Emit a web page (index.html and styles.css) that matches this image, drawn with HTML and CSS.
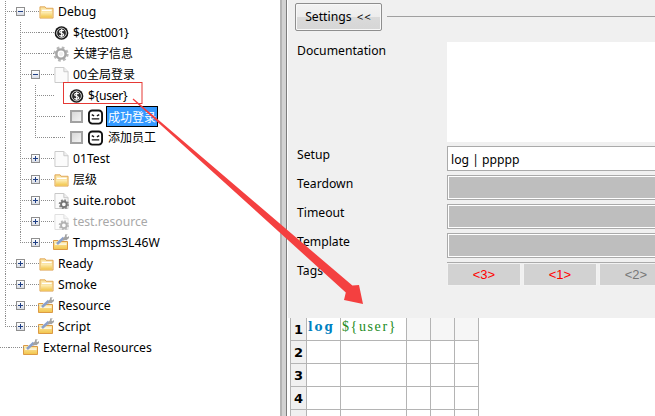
FILE: index.html
```html
<!DOCTYPE html>
<html lang="zh">
<head>
<meta charset="utf-8">
<title>RIDE</title>
<link rel="stylesheet" href="styles.css">
</head>
<body>
<svg class="defs" width="0" height="0">
  <defs>
    <linearGradient id="fg" x1="0" y1="0" x2="0" y2="1"><stop offset="0" stop-color="#fdeeb8"/><stop offset="1" stop-color="#f2c448"/></linearGradient>
    <symbol id="i-folder" viewBox="0 0 16 16">
      <path d="M1 2.500h5.500l1 1.500h7.500v10.500H1z" fill="#fae3a0" stroke="#dfa352"/>
      <path d="M3 5.500h10.500v1.500H3z" fill="#fff"/>
      <path d="M2 8h12v6H2z" fill="url(#fg)"/>
    </symbol>
    <symbol id="i-tool" viewBox="0 0 16 16">
      <path d="M.5 6.500h4.500l1 1h8.500v8H.5z" fill="url(#fg)" stroke="#dc9a45"/>
      <path d="M2 9.500h11.500v1.200H2z" fill="#fff"/>
      <path d="M4 10 10.800 3.800" stroke="#8aa0cc" stroke-width="2.600"/>
      <path d="M9.500 5 11.800 2.500 12.300.3l2.500.2-1.600 1.600 1.200 1.200 1.500-1.300.2 2-2.600 2.200-1.800-.2-1 1z" fill="#a2a2a2"/>
    </symbol>
    <symbol id="i-var" viewBox="0 0 16 16">
      <circle cx="8" cy="8" r="7.300" fill="#161616"/>
      <circle cx="8" cy="8" r="5.200" fill="#2a2a2a" stroke="#dcdcdc"/>
      <path d="M10.500 5.800C9.500 4.800 6 4.800 6 6.600S10.500 8.200 10.500 10C10.500 11.500 7 11.500 5.800 10.400M8.200 3.800v8.600" fill="none" stroke="#fff" stroke-width="1.200"/>
    </symbol>
    <symbol id="i-gear" viewBox="0 0 18 18">
      <circle cx="9" cy="9" r="6.800" fill="none" stroke="#b8b8b8" stroke-width="3.600" stroke-dasharray="2.800 2.540"/>
      <circle cx="9" cy="9" r="5.200" fill="none" stroke="#a6a6a6" stroke-width="2.800"/>
      <circle cx="9" cy="9" r="2.400" fill="#f0f0f0"/>
    </symbol>
    <symbol id="i-page" viewBox="0 0 16 17">
      <path d="M1 .5h9.500l4.500 4.500v11.500H1z" fill="#fbfbfb" stroke="#c8c8c8"/>
      <path d="M10.500.5v4.500h4.500" fill="#efefef" stroke="#c8c8c8"/>
    </symbol>
    <symbol id="i-suite" viewBox="0 0 16 17">
      <path d="M1 .5h9.500l4.500 4.500v11.500H1z" fill="#fbfbfb" stroke="#c4c4c4"/>
      <path d="M10.500.5v4.500h4.500" fill="#efefef" stroke="#c4c4c4"/>
      <circle cx="10.500" cy="12" r="4.500" fill="none" stroke="#858585" stroke-width="2" stroke-dasharray="1.800 1.730"/>
      <circle cx="10.500" cy="12" r="3" fill="none" stroke="#757575" stroke-width="2"/>
    </symbol>
    <symbol id="i-robot" viewBox="0 0 16 16">
      <rect x="1" y="1" width="14" height="14" rx="3.500" fill="#fff" stroke="#111" stroke-width="2"/>
      <path d="M4 5.500l2.500 1.200M12 5.500 9.500 6.700M4 10h8" stroke="#111" stroke-width="1.500" fill="none"/>
    </symbol>
  </defs>
</svg>

<div class="app">
  <nav class="tree">
    <div class="row"><span class="g tee"></span><span class="g h"><i class="box minus"></i></span><span class="g h"></span><svg class="ico"><use href="#i-folder"/></svg><span class="lbl">Debug</span></div>
    <div class="row"><span class="g v"></span><span class="g tee"></span><span class="g h"></span><span class="g h"></span><svg class="ico"><use href="#i-var"/></svg><span class="lbl vn">${test001}</span></div>
    <div class="row"><span class="g v"></span><span class="g tee"></span><span class="g h"></span><span class="g h"></span><svg class="ico gear"><use href="#i-gear"/></svg><span class="lbl zh">关键字信息</span></div>
    <div class="row"><span class="g v"></span><span class="g tee"></span><span class="g h"><i class="box minus"></i></span><span class="g h"></span><svg class="ico"><use href="#i-page"/></svg><span class="lbl mixed">00<span class="zh">全局登录</span></span></div>
    <div class="row"><span class="g v"></span><span class="g v"></span><span class="g tee"></span><span class="g h"></span><span class="g"></span><svg class="ico"><use href="#i-var"/></svg><span class="lbl vn">${user}</span></div>
    <div class="row"><span class="g v"></span><span class="g v"></span><span class="g tee"></span><span class="g h"></span><span class="g h short"></span><i class="check"></i><svg class="ico"><use href="#i-robot"/></svg><span class="lbl selected zh">成功登录</span></div>
    <div class="row"><span class="g v"></span><span class="g v"></span><span class="g ell"></span><span class="g h"></span><span class="g h short"></span><i class="check"></i><svg class="ico"><use href="#i-robot"/></svg><span class="lbl test zh">添加员工</span></div>
    <div class="row"><span class="g v"></span><span class="g tee"></span><span class="g h"><i class="box plus"></i></span><span class="g h"></span><svg class="ico"><use href="#i-page"/></svg><span class="lbl">01Test</span></div>
    <div class="row"><span class="g v"></span><span class="g tee"></span><span class="g h"><i class="box plus"></i></span><span class="g h"></span><svg class="ico"><use href="#i-folder"/></svg><span class="lbl zh">层级</span></div>
    <div class="row"><span class="g v"></span><span class="g tee"></span><span class="g h"><i class="box plus"></i></span><span class="g h"></span><svg class="ico"><use href="#i-suite"/></svg><span class="lbl">suite.robot</span></div>
    <div class="row"><span class="g v"></span><span class="g tee"></span><span class="g h"><i class="box plus"></i></span><span class="g h"></span><svg class="ico faded"><use href="#i-suite"/></svg><span class="lbl muted">test.resource</span></div>
    <div class="row"><span class="g v"></span><span class="g ell"></span><span class="g h"><i class="box plus"></i></span><span class="g h"></span><svg class="ico tool"><use href="#i-tool"/></svg><span class="lbl">Tmpmss3L46W</span></div>
    <div class="row"><span class="g tee"></span><span class="g h"><i class="box plus"></i></span><span class="g h"></span><svg class="ico"><use href="#i-folder"/></svg><span class="lbl">Ready</span></div>
    <div class="row"><span class="g tee"></span><span class="g h"><i class="box plus"></i></span><span class="g h"></span><svg class="ico"><use href="#i-folder"/></svg><span class="lbl">Smoke</span></div>
    <div class="row"><span class="g tee"></span><span class="g h"><i class="box plus"></i></span><span class="g h"></span><svg class="ico tool"><use href="#i-tool"/></svg><span class="lbl">Resource</span></div>
    <div class="row"><span class="g ell"></span><span class="g h"><i class="box plus"></i></span><span class="g h"></span><svg class="ico tool"><use href="#i-tool"/></svg><span class="lbl">Script</span></div>
    <div class="row"><span class="g h"></span><span class="g h"></span><svg class="ico tool"><use href="#i-tool"/></svg><span class="lbl">External Resources</span></div>
  </nav>

  <div class="sash"></div>

  <main class="editor">
    <section class="settings">
      <div class="settings-head">
        <button class="toggle" type="button">Settings <span class="chev">&lt;&lt;</span></button>
        <span class="rule"></span>
      </div>
      <div class="form">
        <div class="name">Documentation</div>
        <div class="doc"></div>
        <div class="name">Setup</div>
        <div class="field">log | ppppp</div>
        <div class="name">Teardown</div>
        <div class="field off"></div>
        <div class="name">Timeout</div>
        <div class="field off"></div>
        <div class="name">Template</div>
        <div class="field off"></div>
        <div class="name">Tags</div>
        <div class="tags">
          <span class="tag red">&lt;3&gt;</span>
          <span class="tag red">&lt;1&gt;</span>
          <span class="tag">&lt;2&gt;</span>
        </div>
      </div>
    </section>
    <section class="grid">
      <div class="hd">1</div><div class="c kw">log</div><div class="c var">${user}</div><div class="c first"></div><div class="c first"></div><div class="c first"></div>
      <div class="hd">2</div><div class="c"></div><div class="c"></div><div class="c"></div><div class="c"></div><div class="c"></div>
      <div class="hd">3</div><div class="c"></div><div class="c"></div><div class="c"></div><div class="c"></div><div class="c"></div>
      <div class="hd">4</div><div class="c"></div><div class="c"></div><div class="c"></div><div class="c"></div><div class="c"></div>
      <div class="hd"></div><div class="c"></div><div class="c"></div><div class="c"></div><div class="c"></div><div class="c"></div>
    </section>
  </main>
</div>

<svg class="annot" viewBox="0 0 655 416" width="655" height="416">
  <rect class="mark" x="63.500" y="82.500" width="78.500" height="21"/>
  <polygon class="arrow" points="132.600,99.400 345.800,292.400 344,300 363,304 359,285 352.400,285.600 133.400,98.600"/>
</svg>
</body>
</html>
```
FILE: styles.css
```css
* { box-sizing: border-box; }
html, body { margin: 0; height: 100%; background: #fff; overflow: hidden; }
body { position: relative; font: 12.2px "Noto Sans", "Noto Sans CJK SC", sans-serif; color: #000; }
.defs { position: absolute; }
.zh { font-family: "Noto Sans CJK SC", sans-serif; font-size: 12px; }

.app { display: grid; grid-template-columns: 280px 8px 1fr; width: 655px; height: 416px; overflow: hidden; }

/* tree */
.tree { margin-left: -6px; padding-top: 1px; overflow: hidden; }
.row { display: flex; align-items: center; height: 21px; white-space: nowrap; }
.g { flex: none; position: relative; width: 15px; height: 21px; background-repeat: no-repeat; }
.v, .tee, .ell {
  --vd: repeating-linear-gradient(to bottom, #8c8c8c 0 1px, transparent 1px 2px);
  --hd: repeating-linear-gradient(to right, #8c8c8c 0 1px, transparent 1px 2px);
}
.v { background-image: var(--vd); background-size: 1px 21px; background-position: 11px 0; }
.tee { background-image: var(--vd), var(--hd); background-size: 1px 21px, 4px 1px; background-position: 11px 0, 11px 10px; }
.ell { background-image: var(--vd), var(--hd); background-size: 1px 11px, 4px 1px; background-position: 11px 0, 11px 10px; }
.h { background-image: repeating-linear-gradient(to right, #8c8c8c 0 1px, transparent 1px 2px); background-size: 15px 1px; background-position: 0 10px; }
.h.short { background-size: 12px 1px; }
.box { position: absolute; left: 7px; top: 6px; width: 9px; height: 9px; border: 1px solid #8f8f8f; background: linear-gradient(#fff, #d9dde6); }
.box::before, .plus::after { content: ""; position: absolute; background: #1f3f85; }
.box::before { left: 1px; top: 3px; width: 5px; height: 1px; }
.plus::after { left: 3px; top: 1px; width: 1px; height: 5px; }
.ico { flex: none; width: 15px; height: 16px; overflow: visible; }
.ico.tool { width: 16px; height: 16px; margin: -1px 0 0 -1px; }
.ico.gear { width: 16px; height: 16px; margin: 0 0 0 -1px; }
.faded { opacity: .55; }
.lbl { margin: 0 0 0 4px; }
.lbl.zh, .lbl.mixed { margin-bottom: 2px; }
.vn { letter-spacing: -.3px; }
.muted { color: #a8a8a8; }
.check { flex: none; width: 13px; height: 13px; margin: 0 5px 0 1px; border: 2px solid #a2a2a2; background: linear-gradient(135deg, #d8d8d8, #f4f4f4); }
.lbl.selected { margin: 0 0 0 3px; padding: 2px; line-height: 17px; background: #39f; color: #fff; outline: 1px solid #000; outline-offset: -1px; }
.lbl.test { margin-left: 5px; }

/* sash */
.sash { background: linear-gradient(to right, #b4b4b4 0 2px, #d2d2d2 2px 6px, #7c7c7c 6px 7px, #fff 7px); }

/* right side */
.editor { display: flex; flex-direction: column; min-width: 0; overflow: hidden; }
.settings { flex: none; height: 318px; background: #f0f0f0; padding: 3px 0 0 7px; }
.settings-head { display: flex; align-items: center; gap: 5px; height: 28px; }
.toggle { flex: none; width: 87px; height: 28px; padding: 0 0 2px; border: 1px solid #8e8e8e; border-radius: 2px; background: linear-gradient(#f3f3f3 0, #ececec 50%, #dadada 51%, #d6d6d6); font: inherit; color: #000; box-shadow: inset 0 0 0 1px #f8f8f8; }
.chev { margin-left: 2px; letter-spacing: 1px; font-size: 11.500px; }
.rule { flex: 1; height: 1px; background: #a0a0a0; margin-top: -1px; }
.form { display: grid; grid-template-columns: 150px 1fr; grid-template-rows: 100px 25px 25px 25px 25px 24px; row-gap: 4px; margin: 11px -8px 0 2px; }
.name { line-height: 18px; }
.doc { background: #fff; }
.field { border: 1px solid #aaa; background: #fff; padding-left: 3px; line-height: 25px; }
.off { background: #bebebe; box-shadow: inset 0 0 0 1px #fff; }
.tags { display: flex; gap: 2px; border-top: 1px solid #aaa; overflow: hidden; }
.tag { flex: none; width: 74px; display: flex; align-items: center; justify-content: center; background: #d2d2d2; border: 1px solid #f2f2f2; font: 13px "Liberation Sans", sans-serif; color: #777; }
.tag.red { color: #f00; }

.grid { display: grid; grid-template-columns: 17px 34px 66px 24px 24px 24px; grid-auto-rows: 23px; margin-left: 2px; font: 13px "DejaVu Sans", sans-serif; }
.hd { display: flex; align-items: center; justify-content: center; background: #f0f0f0; border: solid #b4b4b4; border-width: 0 1px 1px 1px; font-weight: 700; }
.c { border: solid #b4b4b4; border-width: 0 1px 1px 0; padding-left: 1px; white-space: nowrap; }
.first { background: #f6f6f6; }
.kw { color: #0080c0; font: 700 12px/18px "DejaVu Serif", serif; letter-spacing: 2px; }
.var { color: #228b22; font: 14px/18px "Liberation Serif", serif; letter-spacing: 1.600px; }

/* screenshot annotation drawn on top */
.annot { position: absolute; left: 0; top: 0; pointer-events: none; }
.mark { fill: none; stroke: #e53935; stroke-width: 1; }
.arrow { fill: #f44040; }
```
